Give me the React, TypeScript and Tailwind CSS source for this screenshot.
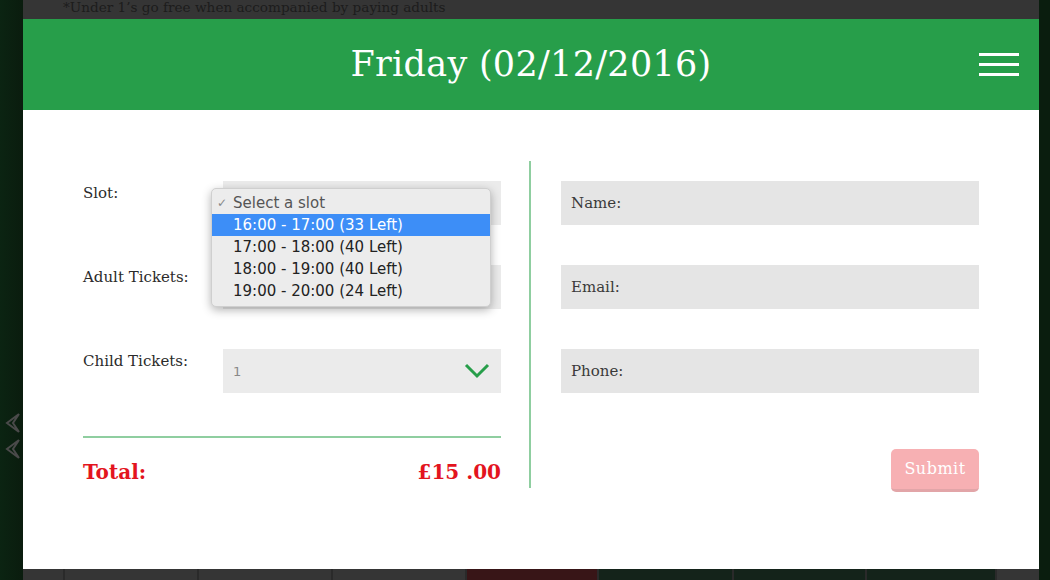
import { useState } from "react";

const serif = "font-['DejaVu_Serif',serif]";

const slots = [
  "16:00 - 17:00 (33 Left)",
  "17:00 - 18:00 (40 Left)",
  "18:00 - 19:00 (40 Left)",
  "19:00 - 20:00 (24 Left)",
];

const Chevron = () => (
  <svg width="26" height="16" viewBox="0 0 26 16" fill="none">
    <path d="M2 2 L13 13 L24 2" stroke="#279e4a" strokeWidth="3" />
  </svg>
);

const SelectBox = ({ value }: { value?: string }) => (
  <div className="flex-1 h-[44px] bg-[#ebebeb] flex items-center justify-between pl-[10px] pr-[11px]">
    <span className="text-[13px] text-[#888] font-['DejaVu_Sans',sans-serif] pt-[2px]">
      {value}
    </span>
    <Chevron />
  </div>
);

const Row = ({ label, children }: { label: string; children: React.ReactNode }) => (
  <div className="flex h-[44px]">
    <div className="w-[140px] text-[15px] leading-[24px] text-[#2b2b2b]">{label}</div>
    {children}
  </div>
);

const Field = ({ placeholder }: { placeholder: string }) => (
  <div className="h-[44px] bg-[#e5e5e5] flex items-center px-[10px] text-[15px] text-[#3a3a3a]">
    {placeholder}
  </div>
);

export default function App() {
  const [selected] = useState(0);
  return (
    <div className={`w-[1050px] h-[580px] overflow-hidden flex bg-[#0b2010] ${serif}`}>
      {/* left strip */}
      <div className="w-[23px] bg-gradient-to-r from-[#0b2412] to-[#0a1c0e] flex flex-col justify-start pt-[412px] pl-[3px] gap-[4px]">
        <svg width="18" height="22" viewBox="0 0 18 22" fill="none">
          <path d="M16 2 L4 11 L16 20 M16 2 L10 11 L16 20" stroke="#4a4a4a" strokeWidth="2" />
        </svg>
        <svg width="18" height="22" viewBox="0 0 18 22" fill="none">
          <path d="M16 2 L4 11 L16 20 M16 2 L10 11 L16 20" stroke="#4a4a4a" strokeWidth="2" />
        </svg>
      </div>

      <div className="w-[1016px] flex flex-col">
        {/* dimmed page strip */}
        <div className="h-[19px] bg-[#353535] pl-[40px] overflow-hidden">
          <div className="text-[13.6px] leading-[15px] text-[#1c1c1c]">
            *Under 1’s go free when accompanied by paying adults
          </div>
        </div>

        {/* modal header */}
        <div className="h-[91px] bg-[#279e4a] relative flex items-center justify-center">
          <h1 className="text-[35px] text-white tracking-[0.3px]">Friday (02/12/2016)</h1>
          <div className="absolute right-[20px] top-[34px] flex flex-col gap-[7px]">
            <div className="w-[40px] h-[3px] bg-white" />
            <div className="w-[40px] h-[3px] bg-white" />
            <div className="w-[40px] h-[3px] bg-white" />
          </div>
        </div>

        {/* modal body */}
        <div className="h-[459px] bg-white flex px-[60px] pt-[51px]">
          <div className="w-[418px] flex flex-col pt-[20px]">
            <div className="flex flex-col gap-[40px]">
              <Row label="Slot:">
                <div className="flex-1 relative flex">
                  <SelectBox />
                  <div className="absolute left-[-12px] top-[7px] w-[280px] h-[119px] bg-[#ececec] rounded-[5px] shadow-[0_3px_10px_rgba(0,0,0,0.3)] border border-[#cfcfcf] py-[3px] font-['DejaVu_Sans',sans-serif] text-[15px] z-10">
                    <div className="h-[22px] flex items-center text-[#555]">
                      <span className="w-[21px] pl-[5px] text-[12px] text-[#888]">✓</span>
                      Select a slot
                    </div>
                    {slots.map((s, i) => (
                      <div
                        key={s}
                        className={
                          i === selected
                            ? "h-[22px] flex items-center pl-[21px] bg-[#3d8ef7] text-white"
                            : "h-[22px] flex items-center pl-[21px] text-[#222]"
                        }
                      >
                        {s}
                      </div>
                    ))}
                  </div>
                </div>
              </Row>
              <Row label="Adult Tickets:">
                <SelectBox />
              </Row>
              <Row label="Child Tickets:">
                <SelectBox value="1" />
              </Row>
            </div>
            <div className="h-[2px] bg-[#8fcea0] mt-[43px]" />
            <div className="flex justify-between items-center mt-[20px] h-[28px] text-[#e3141e] font-bold text-[20px]">
              <span>Total:</span>
              <span>£15 .00</span>
            </div>
          </div>

          <div className="w-[2px] h-[327px] bg-[#8fcea0] ml-[28px] mr-[30px]" />

          <div className="w-[418px] flex flex-col pt-[20px]">
            <div className="flex flex-col gap-[40px]">
              <Field placeholder="Name:" />
              <Field placeholder="Email:" />
              <Field placeholder="Phone:" />
            </div>
            <div className="flex justify-end mt-[56px]">
              <button className="w-[88px] h-[43px] rounded-[5px] bg-[#f7b0b3] border-b-[3px] border-[#e2a5a8] text-white text-[16px] tracking-[0.5px]">
                Submit
              </button>
            </div>
          </div>
        </div>

        {/* dimmed page bottom */}
        <div className="flex-1 flex gap-[2px] bg-[#2a2a2a]">
          <div className="w-[40px] bg-[#353535]" />
          <div className="w-[132px] bg-[#353535]" />
          <div className="w-[132px] bg-[#353535]" />
          <div className="w-[132px] bg-[#353535]" />
          <div className="w-[130px] bg-[#381517]" />
          <div className="w-[133px] bg-[#14231a]" />
          <div className="w-[131px] bg-[#14231a]" />
          <div className="w-[128px] bg-[#14231a]" />
          <div className="flex-1 bg-[#353535]" />
        </div>
      </div>

      <div className="flex-1 bg-[#0a1d0e]" />
    </div>
  );
}
